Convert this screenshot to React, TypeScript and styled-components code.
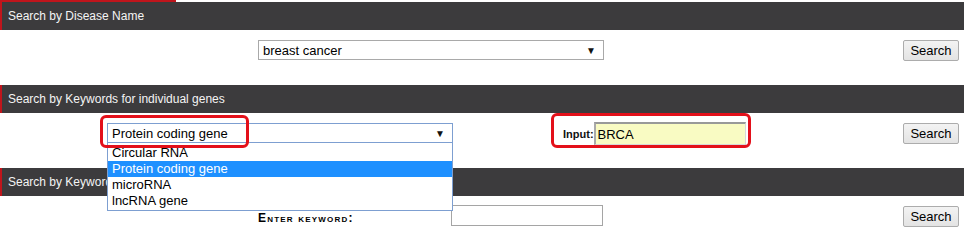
import styled, { createGlobalStyle } from "styled-components";

const DARK = "#3c3b3d";
const RED = "#c0151c";
const MARK = "#e3101a";

const GlobalStyle = createGlobalStyle`
  body {
    margin: 0;
    background: #fff;
    font-family: "Liberation Sans", Arial, sans-serif;
  }
`;

const OPTIONS = ["Circular RNA", "Protein coding gene", "microRNA", "lncRNA gene"];

export default function App() {
  return (
    <Page>
      <GlobalStyle />
      <TopStrip>
        <TabEdge />
      </TopStrip>

      <Header>Search by Disease Name</Header>
      <Body>
        <SelectBox $left={258}>
          <SelectText>breast cancer</SelectText>
          <Arrow>▼</Arrow>
        </SelectBox>
        <SearchButton>Search</SearchButton>
      </Body>

      <Header>Search by Keywords for individual genes</Header>
      <Body>
        <SelectWrap $left={107}>
          <SelectBox $focused>
            <SelectText>Protein coding gene</SelectText>
            <Arrow>▼</Arrow>
          </SelectBox>
          <DropList>
            {OPTIONS.map((opt) => (
              <DropItem key={opt} $active={opt === "Protein coding gene"}>
                {opt}
              </DropItem>
            ))}
          </DropList>
        </SelectWrap>
        <InputGroup>
          <InputLabel>Input:</InputLabel>
          <YellowInput defaultValue="BRCA" />
        </InputGroup>
        <SearchButton>Search</SearchButton>
        <Mark style={{ left: 100, top: 2, width: 149, height: 33 }} />
        <Mark style={{ left: 551, top: 0, width: 200, height: 35 }} />
      </Body>

      <Header>Search by Keywords</Header>
      <Body>
        <KeywordLabel>Enter keyword:</KeywordLabel>
        <PlainInput />
        <SearchButton>Search</SearchButton>
      </Body>
    </Page>
  );
}

const Page = styled.div`
  width: 964px;
  display: flex;
  flex-direction: column;
`;

const TopStrip = styled.div`
  height: 2px;
  display: flex;
`;

const TabEdge = styled.div`
  width: 176px;
  background: ${RED};
`;

const Header = styled.div`
  height: 28px;
  display: flex;
  align-items: center;
  padding-left: 6px;
  background: ${DARK};
  border-left: 2px solid ${RED};
  color: #f4f4f4;
  font-size: 12px;
`;

const Body = styled.div`
  position: relative;
  height: 55px;
  display: flex;
  align-items: flex-start;
  padding-top: 10px;
  box-sizing: border-box;
`;

const SelectWrap = styled.div<{ $left: number }>`
  position: relative;
  margin-left: ${(p) => p.$left}px;
  z-index: 2;
`;

const SelectBox = styled.div<{ $left?: number; $focused?: boolean }>`
  width: 346px;
  height: 20px;
  box-sizing: border-box;
  margin-left: ${(p) => p.$left ?? 0}px;
  display: flex;
  align-items: center;
  justify-content: space-between;
  padding: 0 7px 0 4px;
  border: 1px solid ${(p) => (p.$focused ? "#7d9fd1" : "#a9a9a9")};
  background: #fff;
  font-size: 13px;
  color: #000;
`;

const SelectText = styled.span``;

const Arrow = styled.span`
  font-size: 10px;
  color: #111;
`;

const DropList = styled.div`
  position: absolute;
  top: 100%;
  left: 0;
  width: 346px;
  box-sizing: border-box;
  padding-top: 2px;
  padding-bottom: 1px;
  border: 1px solid #7d9fd1;
  border-top: none;
  background: #fff;
`;

const DropItem = styled.div<{ $active?: boolean }>`
  height: 16px;
  line-height: 16px;
  padding-left: 4px;
  font-size: 13px;
  color: ${(p) => (p.$active ? "#fff" : "#000")};
  background: ${(p) => (p.$active ? "#1e90ff" : "transparent")};
`;

const InputGroup = styled.div`
  margin-left: 110px;
  margin-top: -1px;
  display: flex;
  align-items: center;
`;

const InputLabel = styled.span`
  font-size: 11px;
  font-weight: bold;
  color: #111;
`;

const YellowInput = styled.input`
  width: 152px;
  height: 23px;
  box-sizing: border-box;
  margin: 0;
  padding: 0 2px;
  border: 1px solid #d8d8d8;
  border-top: 2px solid #999;
  border-left: 2px solid #aaa;
  background: #f9fbc3;
  font-family: inherit;
  font-size: 13px;
  color: #000;
  outline: none;
`;

const KeywordLabel = styled.span`
  width: 193px;
  margin-left: 258px;
  margin-top: 5px;
  font-size: 12px;
  font-weight: bold;
  font-variant: small-caps;
  letter-spacing: 1.2px;
  color: #000;
`;

const PlainInput = styled.input`
  width: 152px;
  height: 21px;
  box-sizing: border-box;
  margin: -1px 0 0;
  border: 1px solid #a5a5a5;
  background: #fff;
  outline: none;
`;

const SearchButton = styled.button`
  margin-left: auto;
  margin-right: 5px;
  width: 56px;
  height: 21px;
  padding: 0;
  border: 1px solid #acacac;
  border-radius: 2px;
  background: linear-gradient(#f3f3f3, #e3e3e3);
  font-family: inherit;
  font-size: 13px;
  color: #000;
`;

const Mark = styled.div`
  position: absolute;
  box-sizing: border-box;
  border: 3px solid ${MARK};
  border-radius: 6px;
  z-index: 3;
  pointer-events: none;
`;
